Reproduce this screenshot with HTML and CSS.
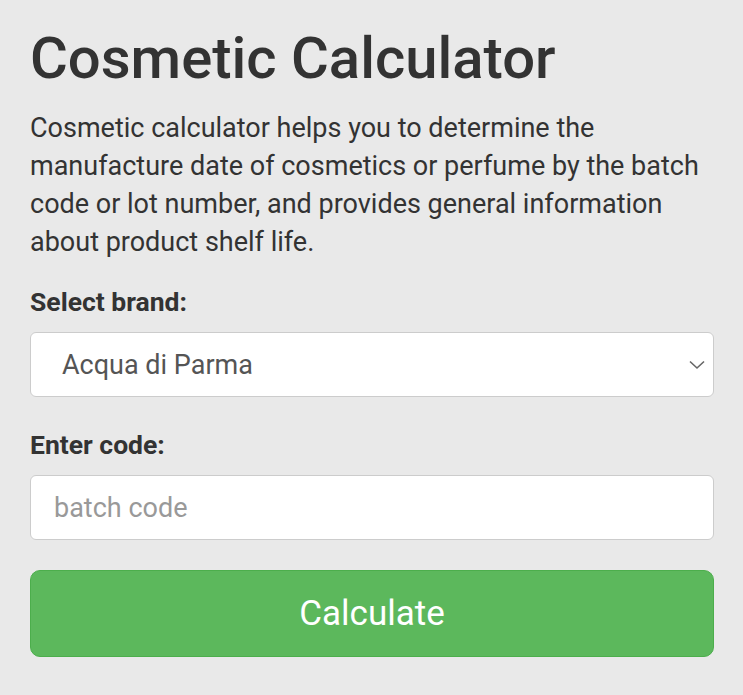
FILE: index.html
```html
<!DOCTYPE html>
<html lang="en">
<head>
    <meta charset="UTF-8">
    <meta name="viewport" content="width=device-width, initial-scale=1.0">
    <title>Cosmetic Calculator</title>
    <link rel="stylesheet" href="styles.css">
</head>
<body>
  <div class="calc">
    <h1 class="calc_title">Cosmetic Calculator</h1>
    <p class="calc_desc">Cosmetic calculator helps you to determine the manufacture date of cosmetics or perfume by the batch code or lot number, and provides general information about product shelf life.</p>

    <label class="calc_label">Select brand:</label>
    <div class="select_box">
        <span class="select_value">Acqua di Parma</span>
        <svg class="select_arrow" width="16" height="10" viewBox="0 0 16 10">
            <path d="M1 1.5 L8 8 L15 1.5" fill="none" stroke="#666" stroke-width="1.6"/>
        </svg>
    </div>

    <label class="calc_label">Enter code:</label>
    <input class="code_input" type="text" placeholder="batch code">

    <button class="calc_btn">Calculate</button>
  </div>
</body>
</html>
```

FILE: styles.css
```css
*{
  margin:0;
  padding:0;
  box-sizing: border-box;
}
body{
  background: #e9e9e9;
  font-family: Roboto, "Liberation Sans", sans-serif;
  color: #333;
}
.calc{
  padding: 22px 29px 0 30px;
  display: flex;
  flex-direction: column;
}
.calc_title{
  font-size: 58px;
  font-weight: 500;
  line-height: 72px;
  margin-bottom: 15px;
}
.calc_desc{
  font-size: 27px;
  line-height: 38px;
  margin-bottom: 23px;
}
.calc_label{
  font-size: 26.5px;
  font-weight: 700;
  line-height: 36px;
  margin-bottom: 12px;
}
.select_box{
  height: 65px;
  background: #fff;
  border: 1px solid #ccc;
  border-radius: 6px;
  display: flex;
  align-items: center;
  justify-content: space-between;
  padding: 0 8px 0 31px;
  margin-bottom: 30px;
}
.select_value{
  font-size: 27px;
  color: #555;
}
.code_input{
  height: 65px;
  background: #fff;
  border: 1px solid #ccc;
  border-radius: 6px;
  padding: 0 23px;
  font-family: Roboto, "Liberation Sans", sans-serif;
  font-size: 27px;
  color: #555;
  margin-bottom: 30px;
}
.code_input::placeholder{
  color: #999;
}
.calc_btn{
  height: 87px;
  background: #5cb85c;
  border: 1px solid #4cae4c;
  border-radius: 10px;
  color: #fff;
  font-family: Roboto, "Liberation Sans", sans-serif;
  font-size: 35px;
}
```
